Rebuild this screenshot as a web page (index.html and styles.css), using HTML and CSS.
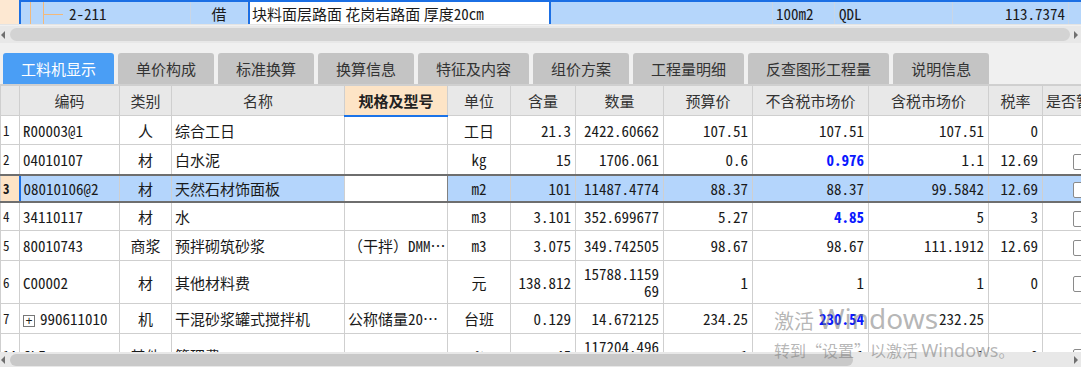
FILE: index.html
```html
<!DOCTYPE html>
<html lang="zh-CN">
<head>
<meta charset="utf-8">
<title>工料机显示</title>
<link rel="stylesheet" href="styles.css">
</head>
<body>
<div class="top-grid">
  <div class="tg-rn"></div>
  <div class="tg-row">
    <div class="tg-cell tg-code mono">2-211</div>
    <div class="tg-cell tg-type">借</div>
    <div class="tg-cell tg-name">块料面层路面 花岗岩路面 厚度<span class="mono">20cm</span></div>
    <div class="tg-cell tg-blank"></div>
    <div class="tg-cell tg-unit mono">100m2</div>
    <div class="tg-cell tg-expr mono">QDL</div>
    <div class="tg-cell tg-qty mono">113.7374</div>
    <div class="tg-cell tg-rest"></div>
  </div>
</div>
<div class="hscroll top-scroll">
  <span class="arrow-left"></span>
  <span class="thumb"></span>
  <span class="arrow-right"></span>
</div>
<div class="tabs">
  <div class="tab active">工料机显示</div>
  <div class="tab">单价构成</div>
  <div class="tab">标准换算</div>
  <div class="tab">换算信息</div>
  <div class="tab">特征及内容</div>
  <div class="tab">组价方案</div>
  <div class="tab">工程量明细</div>
  <div class="tab">反查图形工程量</div>
  <div class="tab">说明信息</div>
</div>
<div class="grid-wrap">
  <table class="grid">
    <colgroup>
      <col class="c-rn"><col class="c-code"><col class="c-type"><col class="c-name"><col class="c-spec"><col class="c-unit"><col class="c-amt"><col class="c-qty"><col class="c-budget"><col class="c-mkt"><col class="c-mkttax"><col class="c-rate"><col class="c-flag">
    </colgroup>
    <thead>
      <tr class="hdr">
        <th></th><th>编码</th><th>类别</th><th>名称</th><th class="spec-h">规格及型号</th><th>单位</th><th>含量</th><th>数量</th><th>预算价</th><th>不含税市场价</th><th>含税市场价</th><th>税率</th><th class="left">是否暂估</th>
      </tr>
    </thead>
    <tbody>
      <tr class="r29">
        <td class="rn mono">1</td><td class="mono">R00003@1</td><td class="c">人</td><td>综合工日</td><td></td><td class="c">工日</td><td class="num mono">21.3</td><td class="num mono">2422.60662</td><td class="num mono">107.51</td><td class="num mono">107.51</td><td class="num mono">107.51</td><td class="num mono">0</td><td></td>
      </tr>
      <tr class="r30">
        <td class="rn mono">2</td><td class="mono">04010107</td><td class="c">材</td><td>白水泥</td><td></td><td class="c mono">kg</td><td class="num mono">15</td><td class="num mono">1706.061</td><td class="num mono">0.6</td><td class="num mono blue">0.976</td><td class="num mono">1.1</td><td class="num mono">12.69</td><td class="cbx"><span class="checkbox"></span></td>
      </tr>
      <tr class="r27 sel">
        <td class="rn mono cur">3</td><td class="mono code-sel">08010106@2</td><td class="c">材</td><td>天然石材饰面板</td><td class="edit"></td><td class="c mono">m2</td><td class="num mono">101</td><td class="num mono">11487.4774</td><td class="num mono">88.37</td><td class="num mono">88.37</td><td class="num mono">99.5842</td><td class="num mono">12.69</td><td class="cbx"><span class="checkbox"></span></td>
      </tr>
      <tr class="r29">
        <td class="rn mono">4</td><td class="mono">34110117</td><td class="c">材</td><td>水</td><td></td><td class="c mono">m3</td><td class="num mono">3.101</td><td class="num mono">352.699677</td><td class="num mono">5.27</td><td class="num mono blue">4.85</td><td class="num mono">5</td><td class="num mono">3</td><td class="cbx"><span class="checkbox"></span></td>
      </tr>
      <tr class="r30">
        <td class="rn mono">5</td><td class="mono">80010743</td><td class="c">商浆</td><td>预拌砌筑砂浆</td><td>（干拌）<span class="mono">DMM…</span></td><td class="c mono">m3</td><td class="num mono">3.075</td><td class="num mono">349.742505</td><td class="num mono">98.67</td><td class="num mono">98.67</td><td class="num mono">111.1912</td><td class="num mono">12.69</td><td class="cbx"><span class="checkbox"></span></td>
      </tr>
      <tr class="r43">
        <td class="rn mono">6</td><td class="mono">C00002</td><td class="c">材</td><td>其他材料费</td><td></td><td class="c">元</td><td class="num mono">138.812</td><td class="num mono wrap">15788.1159<br>69</td><td class="num mono">1</td><td class="num mono">1</td><td class="num mono">1</td><td class="num mono">0</td><td class="cbx"><span class="checkbox"></span></td>
      </tr>
      <tr class="r30">
        <td class="rn mono">7</td><td class="mono"><span class="plus">+</span>990611010</td><td class="c">机</td><td>干混砂浆罐式搅拌机</td><td>公称储量<span class="mono">20…</span></td><td class="c">台班</td><td class="num mono">0.129</td><td class="num mono">14.672125</td><td class="num mono">234.25</td><td class="num mono blue">230.54</td><td class="num mono">232.25</td><td class="num mono"></td><td></td>
      </tr>
      <tr class="r43">
        <td class="rn mono">14</td><td class="mono">CLF</td><td class="c">其他</td><td>管理费</td><td></td><td class="c mono">%</td><td class="num mono">45</td><td class="num mono wrap">117204.496<br>8</td><td class="num mono">1</td><td class="num mono">1</td><td class="num mono">1</td><td class="num mono">0</td><td class="cbx"><span class="checkbox"></span></td>
      </tr>
    </tbody>
  </table>
</div>
<div class="hscroll bottom-scroll">
  <span class="arrow-left"></span>
  <span class="thumb"></span>
  <span class="track-rest"></span>
  <span class="arrow-right"></span>
</div>
<div class="watermark">
  <div class="wm-1">激活 <span class="wm-latin">Windows</span></div>
  <div class="wm-2">转到“设置”以激活 <span class="wm-latin2">Windows</span>。</div>
</div>
</body>
</html>
```

FILE: styles.css
```css
* { box-sizing: border-box; }
html, body { margin: 0; padding: 0; }
body {
  width: 1081px;
  height: 367px;
  overflow: hidden;
  position: relative;
  background: #f0f0f0;
  font-family: "Noto Sans CJK SC", "Noto Sans", sans-serif;
  font-size: 15px;
  color: #1a1a1a;
}
.mono {
  font-family: "Noto Sans Mono CJK SC", "Liberation Mono", monospace;
}

/* top grid row */
.top-grid {
  display: flex;
  height: 25px;
  background: #fff;
  border-bottom: 1px solid #e4e4e4;
}
.tg-rn { width: 19px; background: #fde8d2; }
.tg-row {
  flex: 1;
  display: flex;
  background: #b5d6fb;
  border-top: 2px solid #1b6fe4;
  border-left: 2px solid #1b6fe4;
}
.tg-cell {
  height: 100%;
  display: flex;
  align-items: center;
  border-right: 1px solid #c9d6e6;
  white-space: nowrap;
  overflow: hidden;
}
.tg-code {
  width: 170px;
  padding-left: 48px;
  background-image:
    linear-gradient(#f3b97a, #f3b97a),
    linear-gradient(#f3b97a, #f3b97a),
    linear-gradient(#f3b97a, #f3b97a);
  background-repeat: no-repeat;
  background-position: 9px 0, 22px 0, 22px 12px;
  background-size: 1px 100%, 1px 100%, 20px 1px;
}
.tg-type { width: 57px; justify-content: center; }
.tg-name {
  width: 303px;
  background: #fff;
  border-left: 2px solid #1b6fe4;
  border-right: 2px solid #1b6fe4;
  padding-left: 2px;
}
.tg-blank { width: 222px; }
.tg-unit { width: 62px; padding-left: 3px; }
.tg-expr { width: 118px; padding-left: 4px; }
.tg-qty { width: 116px; justify-content: flex-end; padding-right: 3px; }
.tg-rest { flex: 1; border-right: none; }

/* scrollbars */
.hscroll {
  display: flex;
  align-items: center;
  background: #e8e8e8;
}
.top-scroll { height: 17px; margin-top: 1px; padding: 0 3px 0 1px; }
.bottom-scroll { height: 15px; padding: 0 3px 0 1px; }
.arrow-left {
  width: 0; height: 0;
  border-top: 4px solid transparent;
  border-bottom: 4px solid transparent;
  border-right: 4px solid #707070;
  margin-right: 5px;
}
.arrow-right {
  width: 0; height: 0;
  border-top: 4px solid transparent;
  border-bottom: 4px solid transparent;
  border-left: 4px solid #707070;
  margin-left: 4px;
}
.thumb {
  flex: 1;
  height: 13px;
  border-radius: 7px;
  background: #d3d3d3;
}
.bottom-scroll .thumb { flex: 0 0 843px; height: 12px; background: #c9c9c9; }
.track-rest { flex: 1; }

/* tabs */
.tabs {
  display: flex;
  gap: 4px;
  padding-left: 3px;
  margin-top: 10px;
  height: 31px;
}
.tab {
  height: 31px;
  padding: 0 18px;
  display: flex;
  align-items: center;
  background: #c4c4c4;
  border-radius: 3px 3px 0 0;
  color: #333;
  white-space: nowrap;
}
.tab.active { background: #4a9ef5; color: #fff; }

/* data grid */
.grid-wrap {
  height: 268px;
  overflow: hidden;
  background: #fff;
  border-top: 1px solid #d0d0d0;
}
.grid {
  table-layout: fixed;
  border-collapse: collapse;
  width: 1102px;
}
.c-rn { width: 19px; }
.c-code { width: 100px; }
.c-type { width: 52px; }
.c-name { width: 173px; }
.c-spec { width: 103px; }
.c-unit { width: 63px; }
.c-amt { width: 65px; }
.c-qty { width: 88px; }
.c-budget { width: 89px; }
.c-mkt { width: 116px; }
.c-mkttax { width: 120px; }
.c-rate { width: 54px; }
.c-flag { width: 60px; }

.grid th, .grid td {
  border: 1px solid #cfcfcf;
  padding: 0 3px;
  white-space: nowrap;
  overflow: hidden;
  text-align: left;
  vertical-align: middle;
  font-weight: normal;
}
.grid th {
  height: 30px;
  background: #e8e8e8;
  color: #333;
  text-align: center;
}
.grid th.left { text-align: left; }
.grid th.spec-h {
  background: #fde4c6;
  font-weight: bold;
  color: #222;
  border-bottom: 2px solid #1b73e8;
}
.r27 { height: 27px; }
.r29 { height: 29px; }
.r30 { height: 30px; }
.r43 { height: 43px; }
.grid td.rn { padding: 0 0 0 2px; font-size: 13px; background: #fff; }
.grid td.c { text-align: center; }
.grid td.num { text-align: right; padding-right: 4px; }
.grid td.wrap { white-space: normal; line-height: 17px; }
.grid td.blue { color: #0a18ff; font-weight: bold; }
.grid td.cbx { padding-left: 30px; }
.checkbox {
  display: inline-block;
  width: 14px;
  height: 16px;
  border: 1px solid #8a8a8a;
  border-radius: 2px;
  background: #fff;
  vertical-align: middle;
}
.plus {
  display: inline-block;
  width: 12px;
  height: 12px;
  border: 1px solid #777;
  line-height: 10px;
  text-align: center;
  font-size: 12px;
  margin-right: 5px;
  vertical-align: middle;
  font-family: "Liberation Sans", sans-serif;
}
.sel td {
  background: #b4d5fc;
  border-top: 2px solid #6e6e6e;
  border-bottom: 2px solid #6e6e6e;
}
.sel td.cur { background: #fde3c5; font-weight: bold; }
.sel td.code-sel { border-left: 2px solid #1b6fe4; }
.sel td.edit { background: #fff; border-left: 1px solid #808080; border-right: 1px solid #808080; }

/* windows activation watermark */
.watermark {
  position: absolute;
  left: 774px;
  top: 302px;
  color: rgba(120, 120, 120, 0.55);
  pointer-events: none;
  white-space: nowrap;
}
.wm-1 { font-size: 20px; line-height: 32px; }
.wm-latin { font-family: "Noto Sans", "Open Sans", sans-serif; font-size: 28px; }
.wm-2 { font-size: 16px; line-height: 20px; margin-top: 3px; }
.wm-latin2 { font-family: "Noto Sans", "Open Sans", sans-serif; font-size: 18px; }
```
